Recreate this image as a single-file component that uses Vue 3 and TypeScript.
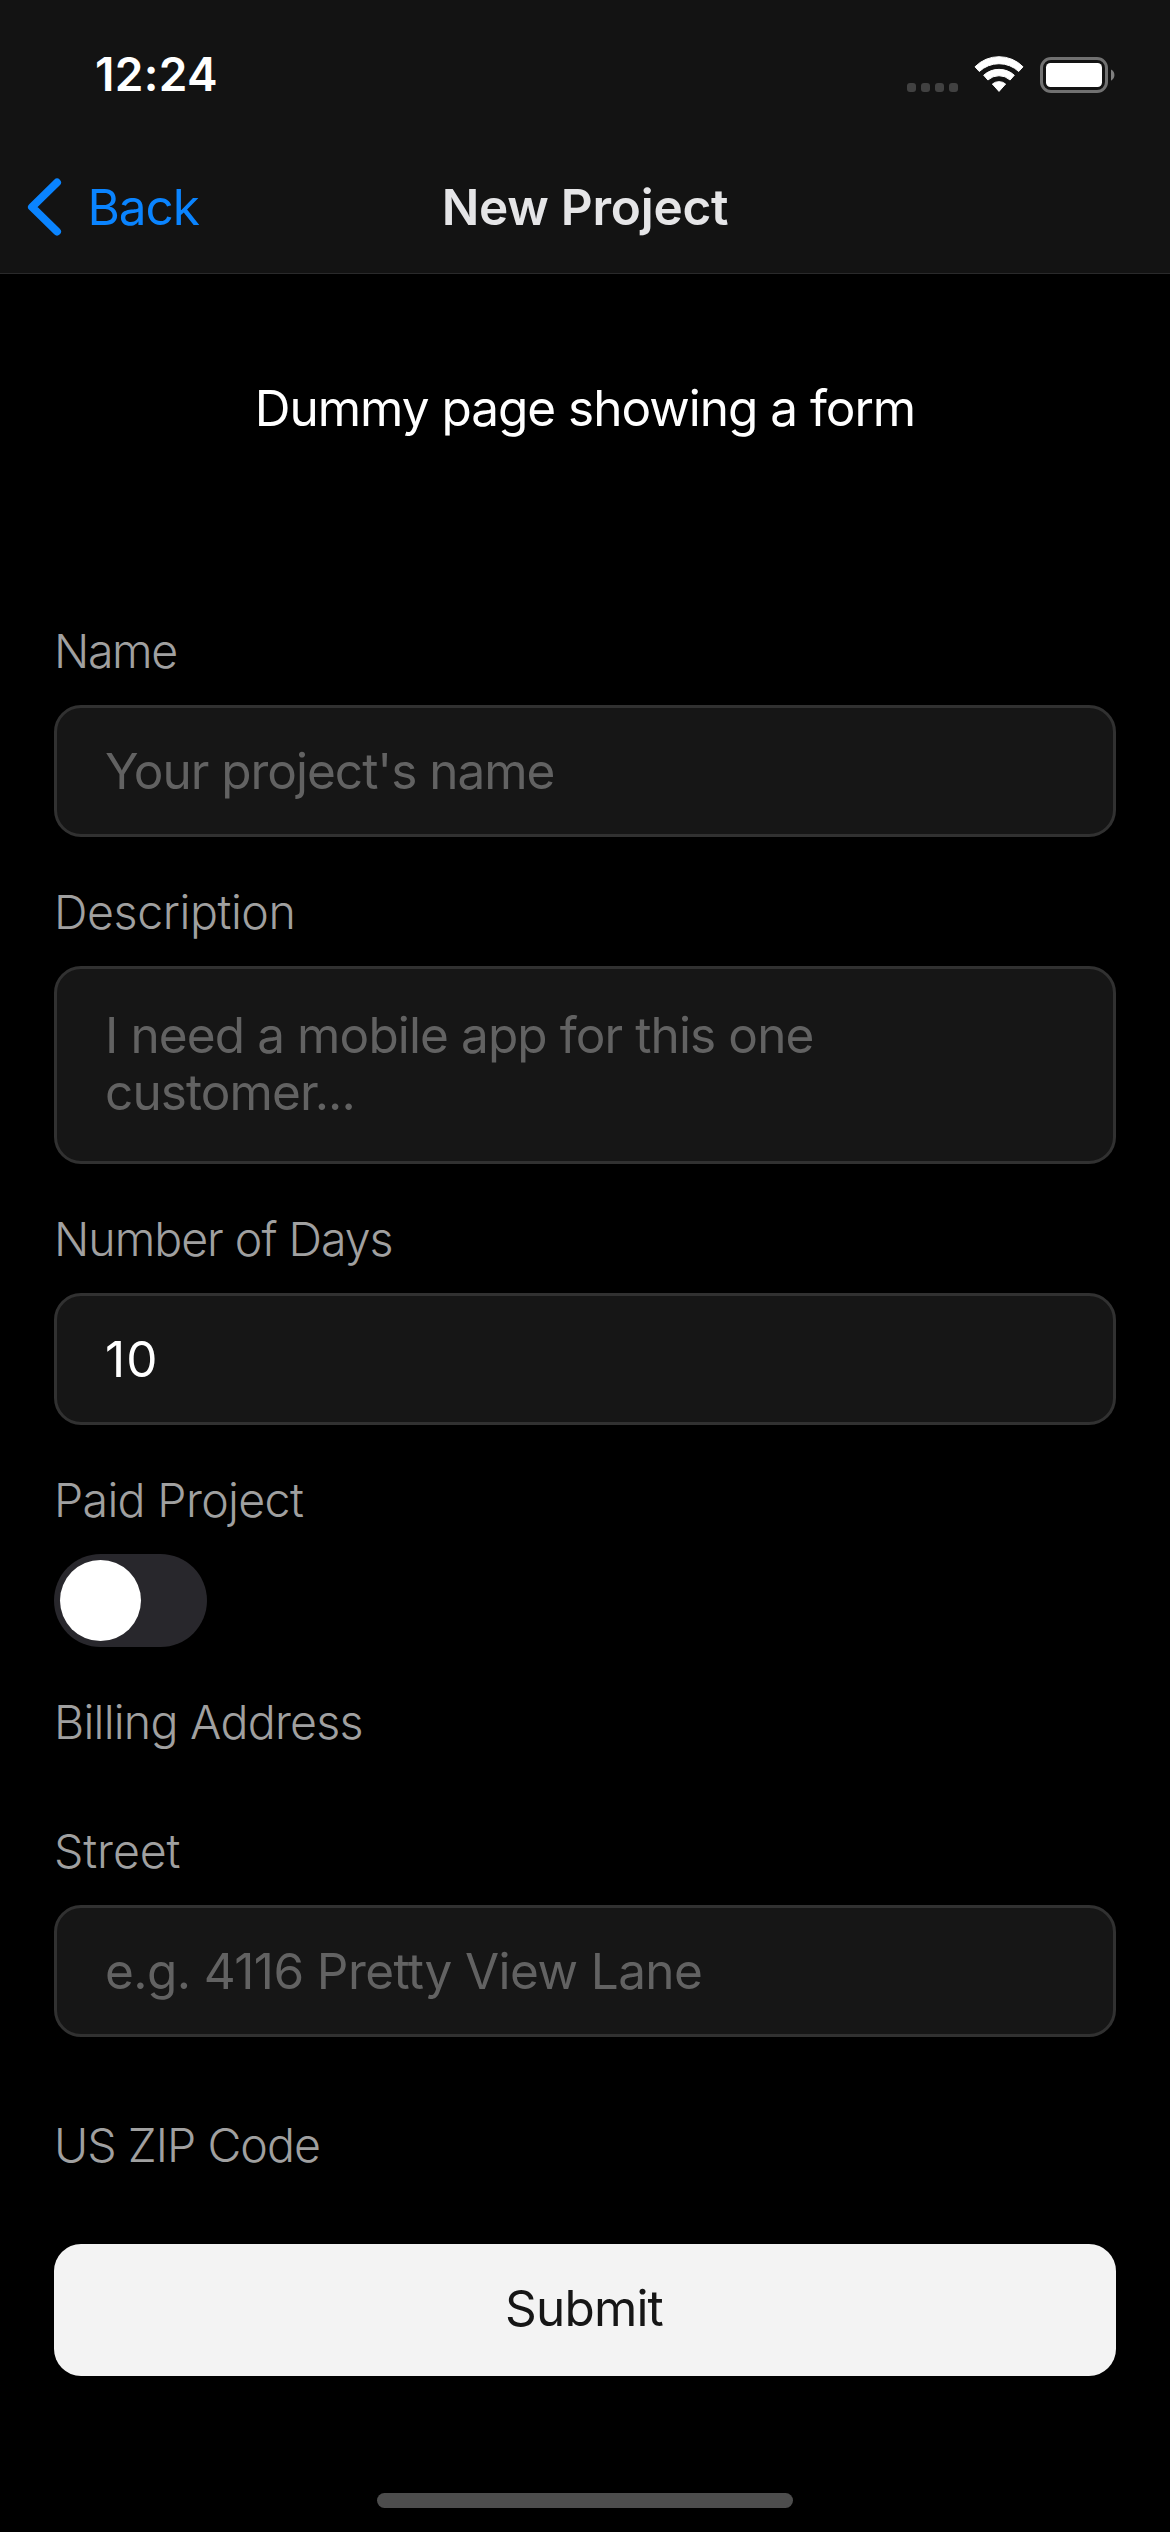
<script setup lang="ts">
import { reactive } from 'vue'

const form = reactive({
  name: '',
  description: '',
  days: '10',
  paid: false,
  street: '',
})
</script>

<template>
  <div class="screen">
    <header class="header">
      <div class="status-bar">
        <span class="time">12:24</span>
        <div class="indicators">
          <div class="cellular"><i v-for="n in 4" :key="n" /></div>
          <svg class="wifi" width="50" height="37" viewBox="0 0 50 37" fill="#fff" stroke="#fff" stroke-width="1" stroke-linejoin="round">
            <path d="M1 10.8A33.6 33.6 0 0 1 49 10.8L44.7 15.5A28.8 28.8 0 0 0 5.3 15.5Z" />
            <path d="M9.7 19.2A23 23 0 0 1 40.3 19.2L36.1 24A16.5 16.5 0 0 0 13.9 24Z" />
            <path d="M18.4 28A10.4 10.4 0 0 1 31.6 28L25 35.4Z" />
          </svg>
          <svg class="battery" width="76" height="36" viewBox="0 0 76 36">
            <rect x="1.5" y="1.5" width="65" height="33" rx="9.5" fill="none" stroke="#717171" stroke-width="3" />
            <rect x="6" y="6" width="56" height="24" rx="4.5" fill="#fff" />
            <path d="M71 12.5A6.3 6.3 0 0 1 71 23.7Z" fill="#808080" />
          </svg>
        </div>
      </div>
      <nav class="nav-bar">
        <button class="back" type="button">
          <svg width="36" height="58" viewBox="0 0 36 58" fill="none" stroke="#0a84ff" stroke-width="8" stroke-linecap="round" stroke-linejoin="round">
            <path d="M30 4.5L5 29L30 53.5" />
          </svg>
          <span>Back</span>
        </button>
        <h1 class="title">New Project</h1>
        <span class="nav-end" />
      </nav>
    </header>

    <form class="form" @submit.prevent>
      <p class="intro">Dummy page showing a form</p>

      <div class="field">
        <label class="label name-label" for="name">Name</label>
        <input id="name" v-model="form.name" class="control" placeholder="Your project's name" />
      </div>

      <div class="field">
        <label class="label description-label" for="description">Description</label>
        <textarea id="description" v-model="form.description" class="control multiline" placeholder="I need a mobile app for this one customer..." />
      </div>

      <div class="field">
        <label class="label days-label" for="days">Number of Days</label>
        <input id="days" v-model="form.days" class="control days" inputmode="numeric" />
      </div>

      <div class="field">
        <span class="label paid-label">Paid Project</span>
        <button class="switch" :class="{ on: form.paid }" type="button" role="switch" :aria-checked="form.paid" aria-label="Paid Project" @click="form.paid = !form.paid">
          <span class="knob" />
        </button>
      </div>

      <fieldset class="address">
        <div class="label billing-label">Billing Address</div>
        <div class="field street-field">
          <label class="label street-label" for="street">Street</label>
          <input id="street" v-model="form.street" class="control street" placeholder="e.g. 4116 Pretty View Lane" />
        </div>
        <div class="label zip-label">US ZIP Code</div>
      </fieldset>

      <button class="submit" type="submit">Submit</button>
    </form>

    <footer class="footer"><div class="home-indicator" /></footer>
  </div>
</template>

<style>
body {
  margin: 0;
  background: #000;
}
</style>

<style scoped>
.screen {
  box-sizing: border-box;
  display: flex;
  flex-direction: column;
  width: 1170px;
  height: 2532px;
  overflow: hidden;
  background: #000;
  color: #fff;
  font-family: Inter, "Liberation Sans", sans-serif;
  font-size: 49.5px;
}

button,
input,
textarea {
  font: inherit;
}

.header {
  flex: none;
  background: #131313;
  border-bottom: 1px solid #2a2a2b;
}

.status-bar {
  box-sizing: border-box;
  display: flex;
  justify-content: space-between;
  align-items: center;
  height: 141px;
  padding: 7px 54px 0 95px;
}

.time {
  font-size: 46px;
  font-weight: 600;
  line-height: 56px;
  letter-spacing: 0.3px;
}

.indicators {
  display: flex;
  align-items: flex-end;
  height: 37px;
}

.cellular {
  display: flex;
  gap: 5px;
  margin: 0 16px 1px 0;
}

.cellular i {
  width: 9px;
  height: 9px;
  border-radius: 3px;
  background: #414141;
}

.wifi {
  margin-right: 16px;
}

.nav-bar {
  display: grid;
  grid-template-columns: 1fr auto 1fr;
  align-items: center;
  height: 132px;
}

.back {
  display: flex;
  align-items: center;
  gap: 24.5px;
  padding: 0 0 0 27px;
  border: 0;
  background: none;
  color: #0a84ff;
  line-height: 60px;
  letter-spacing: -1.1px;
}

.title {
  margin: 0;
  color: #e5e5e7;
  font-size: 49.5px;
  font-weight: 600;
  line-height: 60px;
  letter-spacing: -0.25px;
}

.form {
  display: flex;
  flex-direction: column;
  padding: 104px 54px 0;
}

.intro {
  margin: 0 0 184px;
  line-height: 60px;
  text-align: center;
  letter-spacing: -1.01px;
}

.field {
  display: flex;
  flex-direction: column;
  align-items: flex-start;
  gap: 25px;
  margin-bottom: 46px;
}

.label {
  color: #a0a0a0;
  font-size: 46.5px;
  font-weight: 300;
  line-height: 58px;
}

.name-label { letter-spacing: -1.4px; }
.description-label { letter-spacing: -0.42px; }
.days-label { letter-spacing: -1.02px; }
.paid-label { letter-spacing: -0.66px; }
.billing-label { letter-spacing: -0.75px; }
.street-label { letter-spacing: -0.1px; }
.zip-label { letter-spacing: -0.95px; }

.control {
  box-sizing: border-box;
  width: 100%;
  height: 132px;
  padding: 0 48px;
  border: 3px solid #313131;
  border-radius: 27px;
  outline: 0;
  background: #161616;
  color: #fff;
  letter-spacing: -1.01px;
}

.control::placeholder {
  color: #626262;
  opacity: 1;
}

.multiline {
  display: block;
  height: 198px;
  padding: 38px 48px;
  resize: none;
  overflow: hidden;
  line-height: 57px;
  letter-spacing: -0.89px;
}

.days { letter-spacing: 1px; }
.street { letter-spacing: -0.57px; }

.switch {
  box-sizing: border-box;
  display: flex;
  width: 153px;
  height: 93px;
  padding: 6px;
  border: 0;
  border-radius: 47px;
  background: #28272c;
}

.switch.on {
  justify-content: flex-end;
  background: #30d158;
}

.knob {
  width: 81px;
  height: 81px;
  border-radius: 50%;
  background: #fff;
}

.address {
  display: flex;
  flex-direction: column;
  min-width: 0;
  margin: 0 0 70px;
  padding: 0;
  border: 0;
}

.street-field {
  margin: 71px 0 79px;
}

.submit {
  height: 132px;
  padding: 0 2px 4px 0;
  border: 0;
  border-radius: 27px;
  background: #f3f3f3;
  color: #161616;
  letter-spacing: -0.85px;
}

.footer {
  display: flex;
  justify-content: center;
  margin-top: auto;
  padding-bottom: 24px;
}

.home-indicator {
  width: 416px;
  height: 15px;
  border-radius: 8px;
  background: #4d4d4d;
}
</style>
